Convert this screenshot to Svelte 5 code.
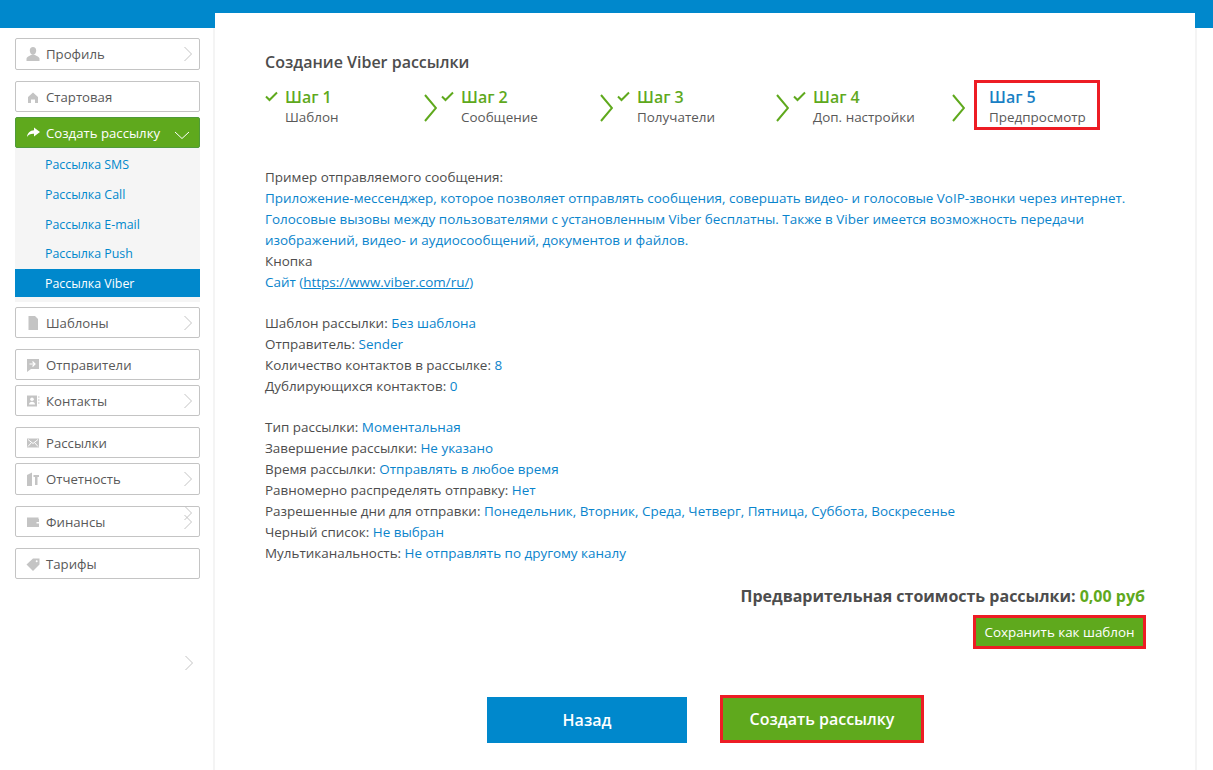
<script>
	const sent = [
		['Шаблон рассылки: ', 'Без шаблона'],
		['Отправитель: ', 'Sender'],
		['Количество контактов в рассылке: ', '8'],
		['Дублирующихся контактов: ', '0']
	];
	const opts = [
		['Тип рассылки: ', 'Моментальная'],
		['Завершение рассылки: ', 'Не указано'],
		['Время рассылки: ', 'Отправлять в любое время'],
		['Равномерно распределять отправку: ', 'Нет'],
		['Разрешенные дни для отправки: ', 'Понедельник, Вторник, Среда, Четверг, Пятница, Суббота, Воскресенье'],
		['Черный список: ', 'Не выбран'],
		['Мультиканальность: ', 'Не отправлять по другому каналу']
	];
	const steps = [
		{ title: 'Шаг 1', sub: 'Шаблон' },
		{ title: 'Шаг 2', sub: 'Сообщение' },
		{ title: 'Шаг 3', sub: 'Получатели' },
		{ title: 'Шаг 4', sub: 'Доп. настройки' }
	];
	const subs = ['Рассылка SMS', 'Рассылка Call', 'Рассылка E-mail', 'Рассылка Push'];
</script>

{#snippet chev()}
	<svg class="chev" width="10" height="16" viewBox="0 0 10 16"><path d="M1.500 1 L8.500 8 L1.500 15" fill="none" stroke="#c4c4c4" stroke-width="1" /></svg>
{/snippet}

<div class="page">
	<div class="topbar"></div>
	<div class="sidebar">
		<a class="item tall gap-l">
			<svg class="ic" viewBox="0 0 14 14"><path d="M7 0c2 0 3.200 1.400 3.200 3.500S9 8 7 8 3.800 5.600 3.800 3.500 5 0 7 0zM.5 14v-2.500c0-1.500 3-2.600 4.500-3.500h4c1.500.9 4.500 2 4.500 3.500V14z" fill="#c4c4c4" /></svg>
			Профиль {@render chev()}
		</a>
		<a class="item gap-s">
			<svg class="ic" viewBox="0 0 14 14"><path d="M7 2.500l5 4.500v6H9V9.500H5V13H2V7z" fill="#c4c4c4" /></svg>
			Стартовая
		</a>
		<a class="item active">
			<svg class="ic" viewBox="0 0 14 14"><path d="M8 1.500l6 4.500-6 4.500V7.800C4.500 7.600 2.500 8.800 1 11c.5-4 3-6.500 7-6.700z" fill="#fff" /></svg>
			Создать рассылку
			<svg class="down" width="16" height="9" viewBox="0 0 16 9"><path d="M1 1l7 6.500L15 1" fill="none" stroke="#fff" stroke-width="1" /></svg>
		</a>
		<div class="submenu">
			{#each subs as s}
				<div class="sub">{s}</div>
			{/each}
			<div class="sub current">Рассылка Viber</div>
		</div>
		<a class="item gap-l">
			<svg class="ic" viewBox="0 0 14 14"><path d="M2.500 0H9l3 3v11H2.500z" fill="#c4c4c4" /></svg>
			Шаблоны {@render chev()}
		</a>
		<a class="item gap-s">
			<svg class="ic" viewBox="0 0 14 14"><path d="M1 1h12v10H5l-4 3z" fill="#c4c4c4" /><path d="M3.500 6h5M6.500 3.500L9 6 6.500 8.500" stroke="#fff" stroke-width="1.200" fill="none" /></svg>
			Отправители
		</a>
		<a class="item gap-l">
			<svg class="ic" viewBox="0 0 14 14"><path d="M1 1.500h10v11H1z" fill="#c4c4c4" /><circle cx="6" cy="5.200" r="1.800" fill="#fff" /><path d="M3 10.500c0-1.800 1.500-2.700 3-2.700s3 .9 3 2.700z" fill="#fff" /><path d="M12 3h1.500M12 6h1.500M12 9h1.500" stroke="#c4c4c4" /></svg>
			Контакты {@render chev()}
		</a>
		<a class="item gap-s">
			<svg class="ic" viewBox="0 0 14 14"><path d="M1 2.500h12v9H1z" fill="#c4c4c4" /><path d="M2 3.500l5 4 5-4M2 10.500l3.500-4M12 10.500l-3.500-4" stroke="#fff" fill="none" /></svg>
			Рассылки
		</a>
		<a class="item tall gap-l">
			<svg class="ic" viewBox="0 0 14 14"><path d="M1 3l5-2.500V14H1zM7.500 3H13v2h-1.500v8H9V5H7.500z" fill="#c4c4c4" /></svg>
			Отчетность {@render chev()}
		</a>
		<a class="item gap-l">
			<svg class="ic" viewBox="0 0 14 14"><path d="M1 2.500h11.500v1.500H13v8H1z" fill="#c4c4c4" /><path d="M10.500 7H13v1.500h-2.500z" fill="#fff" /></svg>
			Финансы {@render chev()}
			<span class="stray">{@render chev()}</span>
		</a>
		<a class="item">
			<svg class="ic" viewBox="0 0 14 14"><path d="M7 1.500h6.500v6L7 14 .5 7.500z" fill="#c4c4c4" /><circle cx="10.700" cy="4.300" r="1" fill="#fff" /></svg>
			Тарифы
		</a>
		<div class="bottom-chev">{@render chev()}</div>
	</div>

	<main class="card">
		<h1>Создание Viber рассылки</h1>
		<div class="steps">
			{#each steps as st}
				<div class="step">
					<svg class="check" width="13" height="11" viewBox="0 0 13 11"><path d="M1 5.500L4.500 9 12 1.500" fill="none" stroke="#5fa91d" stroke-width="2" /></svg>
					<div class="step-text">
						<div class="step-title">{st.title}</div>
						<div class="step-sub">{st.sub}</div>
					</div>
					<svg class="arrow" width="13" height="28" viewBox="0 0 13 28"><path d="M1 1l11 13L1 27" fill="none" stroke="#5fa91d" stroke-width="2" /></svg>
				</div>
			{/each}
			<div class="step-now">
				<div class="step-title blue">Шаг 5</div>
				<div class="step-sub">Предпросмотр</div>
			</div>
		</div>

		<div class="info">
			<div>Пример отправляемого сообщения:</div>
			<div class="val">Приложение-мессенджер, которое позволяет отправлять сообщения, совершать видео- и голосовые VoIP-звонки через интернет.<br />Голосовые вызовы между пользователями с установленным Viber бесплатны. Также в Viber имеется возможность передачи<br />изображений, видео- и аудиосообщений, документов и файлов.</div>
			<div>Кнопка</div>
			<div class="val">Сайт (<u>https://www.viber.com/ru/</u>)</div>
		</div>
		<div class="info">
			{#each sent as [k, v]}
				<div>{k}<span class="val">{v}</span></div>
			{/each}
		</div>
		<div class="info">
			{#each opts as [k, v]}
				<div>{k}<span class="val">{v}</span></div>
			{/each}
		</div>

		<div class="cost">Предварительная стоимость рассылки: <span>0,00 руб</span></div>
		<div class="save-row"><button class="save">Сохранить как шаблон</button></div>
		<div class="actions">
			<button class="big back">Назад</button>
			<button class="big create">Создать рассылку</button>
		</div>
	</main>
</div>

<style>
	:global(body) {
		margin: 0;
		background: #fff;
	}

	.page {
		position: relative;
		height: 770px;
		overflow: hidden;
		display: flex;
		align-items: flex-start;
		font-family: 'Open Sans', sans-serif;
		font-size: 13.45px;
		color: #4d4d4d;
	}

	.topbar {
		position: absolute;
		top: 0;
		left: 0;
		right: 0;
		height: 28px;
		background: #0088cc;
	}

	.sidebar {
		position: relative;
		width: 185px;
		margin: 38px 0 0 15px;
		flex-shrink: 0;
	}

	.item {
		position: relative;
		display: flex;
		align-items: center;
		box-sizing: border-box;
		height: 31px;
		padding-left: 9px;
		gap: 6px;
		border: 1px solid #c4c4c4;
		border-radius: 2px;
		background: #fff;
		color: #595959;
		font-size: 13.2px;
	}

	.item.tall {
		height: 32px;
	}

	.gap-l {
		margin-bottom: 11px;
	}

	.gap-s {
		margin-bottom: 5px;
	}

	.item.active {
		background: #5fa91d;
		border-color: #4f9a3a;
		color: #fff;
	}

	.ic {
		width: 14px;
		height: 14px;
		flex-shrink: 0;
		margin-left: 1px;
	}

	.chev {
		position: absolute;
		right: 6px;
		top: 7px;
	}

	.down {
		position: absolute;
		right: 9px;
		top: 13px;
	}

	.stray {
		position: absolute;
		right: 0;
		top: -9px;
		width: 20px;
		height: 20px;
	}

	.bottom-chev {
		position: absolute;
		left: 169px;
		top: 617px;
		width: 10px;
		height: 16px;
	}

	.bottom-chev .chev {
		position: static;
	}

	.submenu {
		background: #f5f5f5;
		padding-top: 2px;
		padding-bottom: 5px;
		margin-bottom: 5px;
		font-size: 12.4px;
	}

	.sub {
		height: 29.75px;
		line-height: 30.75px;
		padding-left: 30px;
		color: #0088cc;
	}

	.sub.current {
		height: 28px;
		line-height: 29px;
		background: #0088cc;
		color: #fff;
	}

	.card {
		position: relative;
		box-sizing: border-box;
		width: 980px;
		height: 757px;
		margin: 13px 0 0 15px;
		padding: 38px 50px 0 50px;
		background: #fff;
	}

	.card::before {
		content: '';
		position: absolute;
		top: 15px;
		bottom: 0;
		left: -2px;
		right: -2px;
		background: #f4f4f4;
		z-index: -1;
	}

	h1 {
		margin: 0 0 7px;
		font-size: 16px;
		font-weight: 600;
		line-height: 22px;
		color: #4d4d4d;
	}

	.steps {
		display: flex;
		align-items: flex-start;
		height: 50px;
		margin-bottom: 37px;
	}

	.step {
		display: flex;
		width: 176px;
		position: relative;
	}

	.check {
		margin: 11px 7px 0 0;
		flex-shrink: 0;
	}

	.step-text {
		padding-top: 7px;
	}

	.step-title {
		font-size: 16px;
		font-weight: 600;
		line-height: 20px;
		color: #5fa91d;
	}

	.step-title.blue {
		color: #1a7fc4;
	}

	.step-sub {
		line-height: 20px;
		color: #595959;
	}

	.arrow {
		position: absolute;
		left: 159px;
		top: 14px;
	}

	.step-now {
		box-sizing: border-box;
		width: 126px;
		height: 50px;
		margin-left: 5px;
		padding: 4px 0 0 12px;
		border: 3px solid #ed1c24;
	}

	.info {
		line-height: 21px;
		margin-bottom: 20px;
	}

	.val {
		color: #0a84cc;
	}

	.cost {
		text-align: right;
		font-size: 16px;
		font-weight: 700;
		line-height: 22px;
		margin-top: 21px;
	}

	.cost span {
		color: #5fa91d;
	}

	button {
		font-family: inherit;
		border: none;
		color: #fff;
		cursor: pointer;
	}

	.save-row {
		display: flex;
		justify-content: flex-end;
		margin: 8px -1px 0 0;
	}

	.save {
		box-sizing: border-box;
		width: 173px;
		height: 34px;
		padding: 0;
		font-size: 13.4px;
		background: #5fa91d;
		border: 3px solid #ed1c24;
	}

	.actions {
		display: flex;
		margin-top: 46px;
		margin-left: 222px;
		align-items: flex-end;
	}

	.big {
		font-size: 16px;
		font-weight: 600;
	}

	.back {
		width: 200px;
		height: 46px;
		background: #0088cc;
		margin-right: 33px;
	}

	.create {
		box-sizing: border-box;
		width: 204px;
		height: 48px;
		background: #5fa91d;
		border: 3px solid #ed1c24;
	}
</style>
